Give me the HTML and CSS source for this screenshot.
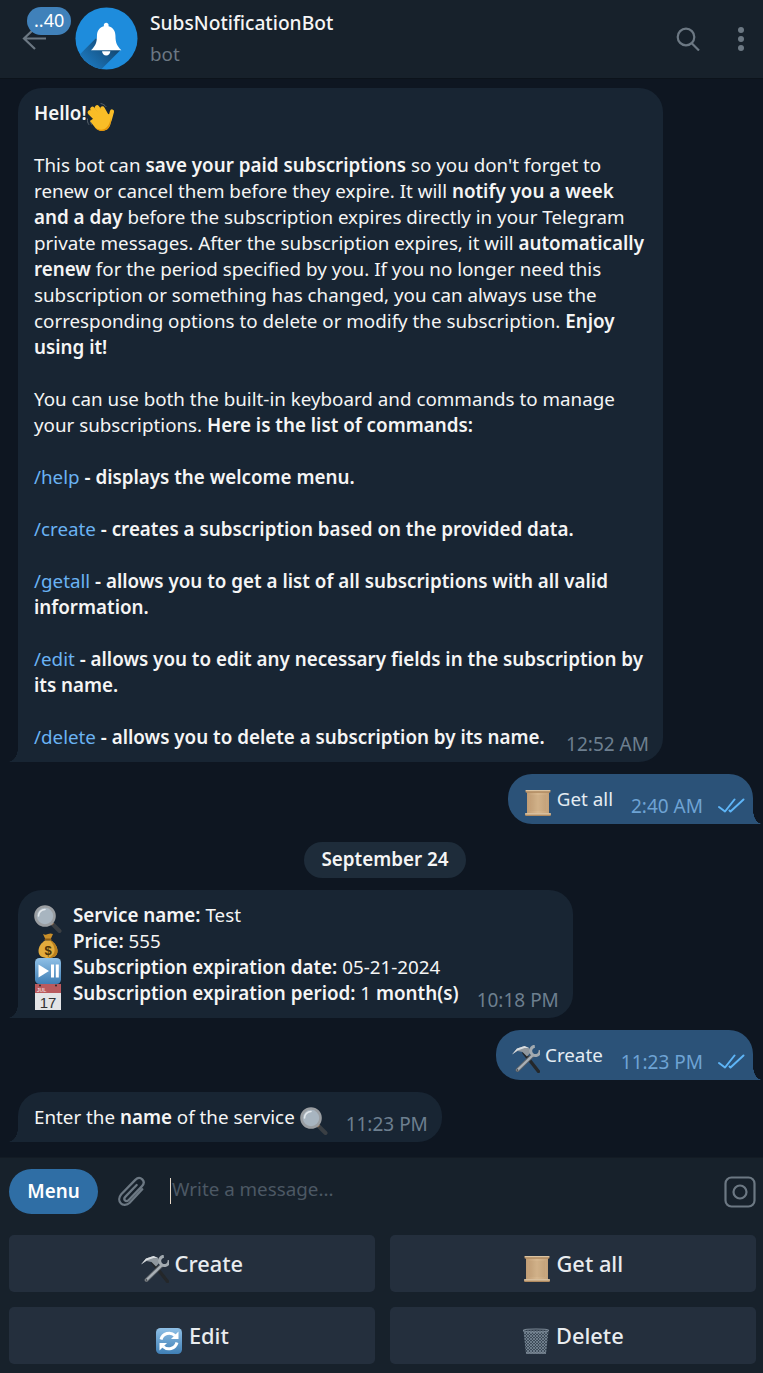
FILE: index.html
```html
<!DOCTYPE html>
<html lang="en">
<head>
  <meta charset="UTF-8">
  <meta name="viewport" content="width=device-width, initial-scale=1.0">
  <title>SubsNotificationBot</title>
  <link rel="stylesheet" href="styles.css">
</head>
<body>

<svg class="defs" width="0" height="0" aria-hidden="true">
  <defs>
    <linearGradient id="scrollFill" x1="0" x2="1" y1="0" y2="0">
      <stop offset="0" stop-color="#c09c74"/>
      <stop offset="0.5" stop-color="#d6b78f"/>
      <stop offset="1" stop-color="#c4a27a"/>
    </linearGradient>
    <linearGradient id="tileBlue" x1="0" x2="0" y1="0" y2="1">
      <stop offset="0" stop-color="#8fc0e6"/>
      <stop offset="1" stop-color="#3f7fb5"/>
    </linearGradient>
    <linearGradient id="bellShadow" gradientUnits="userSpaceOnUse" x1="34" y1="36" x2="12" y2="58">
      <stop offset="0" stop-color="#134a76"/>
      <stop offset="1" stop-color="#1c76bb"/>
    </linearGradient>
    <pattern id="mesh" width="3" height="3" patternUnits="userSpaceOnUse">
      <path d="M0 0L3 3M3 0L0 3" stroke="#8a9aa8" stroke-width="0.6"/>
    </pattern>
    <clipPath id="avatarClip"><circle cx="32" cy="32" r="31.5"/></clipPath>

    <symbol id="eWave" viewBox="6 3 28 28">
      <g fill="none" stroke="#5f6973" stroke-width="0.900" stroke-linecap="round">
        <path d="M20 3.600c2 .3 3.800 1.400 5 3"/>
        <path d="M6.500 19c-.3 2 .2 4 1.300 5.500"/>
        <path d="M9.500 21c0 1.200.4 2.300 1 3.300"/>
      </g>
      <g fill="none" stroke="#f9bd27" stroke-linecap="round">
        <path d="M9 12.500l9 9" stroke-width="4.600"/>
        <path d="M11.500 9l9.500 10.500" stroke-width="4.600"/>
        <path d="M16 7.500l7.500 10" stroke-width="4.600"/>
        <path d="M21.500 8.500l4.500 8" stroke-width="4.400"/>
        <path d="M31 11.500l-2.500 9" stroke-width="4.200"/>
      </g>
      <path d="M13 18l15-4c3 6 2.500 12-2 15.500-4.500 2.500-9 1.500-12-2l-5-6.500z" fill="#f9bd27"/>
      <path d="M14 27.500c3.500 2.500 8 3 11 .5 3-2.500 4.500-6 4.300-10.500 1 6-.5 9.500-3.300 12-4.500 2.500-9 1.500-12-2z" fill="#e59409"/>
    </symbol>

    <symbol id="eScroll" viewBox="0 0 28 28">
      <rect x="3" y="2" width="22" height="24" fill="url(#scrollFill)"/>
      <rect x="1.500" y="1" width="25" height="2.800" rx="1.200" fill="#b08a60"/>
      <rect x="1.500" y="1" width="25" height="1.200" rx="0.600" fill="#dcc4a1"/>
      <rect x="1" y="24.200" width="26" height="2.800" rx="1.200" fill="#b08a60"/>
      <rect x="1" y="24.200" width="26" height="1.200" rx="0.600" fill="#e2cdae"/>
      <g stroke="#b08f68" stroke-width="0.400" opacity="0.700">
        <path d="M6 7h16M6 9h16M6 11h16M6 13h16M6 15h16M6 17h16M6 19h16M6 21h16"/>
      </g>
    </symbol>

    <symbol id="eTools" viewBox="0 0 28 28">
      <path d="M12 8l14.500 18.500" stroke="#24272a" stroke-width="3.300" stroke-linecap="round"/>
      <path d="M0 9.500L5 3.500 12.500 1 17 3l2 4-4 4.500-4.500-4.500-5-1z" fill="#8f979e"/>
      <path d="M0 9.500L5 3.500 12.500 1 17 3l-4.500 0-7 2.500z" fill="#d9dde0"/>
      <path d="M20.500 10.500L5.500 25" stroke="#5c6268" stroke-width="4" stroke-linecap="round"/>
      <path d="M20.500 10.500L5.500 25" stroke="#a9b0b6" stroke-width="2.400" stroke-linecap="round"/>
      <path d="M28 5A4.700 4.700 0 1 1 22.800 1.200" fill="none" stroke="#a2aab0" stroke-width="3"/>
      <circle cx="5.500" cy="25" r="0.800" fill="#2b2f33"/>
    </symbol>

    <symbol id="eGlass" viewBox="0 0 28 28">
      <path d="M17.500 18L25.500 26" stroke="#3a3f44" stroke-width="4" stroke-linecap="round"/>
      <path d="M17 17.500l2 2" stroke="#8d6b4e" stroke-width="3"/>
      <circle cx="11" cy="11" r="9.500" fill="#a8b5c0" stroke="#9a9ea2" stroke-width="2.600"/>
      <path d="M4.500 11a6.500 6.500 0 0 1 6.500-6.500" fill="none" stroke="#e3e8ec" stroke-width="1.600" stroke-linecap="round"/>
    </symbol>

    <symbol id="eBag" viewBox="0 0 28 28">
      <path d="M9 3c2 1 3 .8 5 0 2-.8 3-.8 5 0l-2.500 5.500h-5z" fill="#c98f2a"/>
      <rect x="10.500" y="7.500" width="7" height="2" rx="1" fill="#8a5a15"/>
      <path d="M11 9.500C7 12 4.500 16 4.500 20c0 5 4 7 9.500 7s9.500-2 9.500-7c0-4-2.500-8-6.500-10.500z" fill="#e2ab3c"/>
      <path d="M17 9.500c4 2.500 6.500 6.500 6.500 10.500 0 5-4 7-9.500 7 5-2 7-5 6.500-9-.3-3-2-6-4.500-8.500z" fill="#b97f1d"/>
      <text class="bag-sign" x="14" y="23.500" text-anchor="middle">$</text>
    </symbol>

    <symbol id="ePlay" viewBox="0 0 28 28">
      <rect x="1" y="1" width="26" height="26" rx="4.500" fill="url(#tileBlue)"/>
      <path d="M4.500 7.500L15 14 4.500 20.500z" fill="#fff"/>
      <rect x="17" y="7.500" width="3" height="13" fill="#fff"/>
      <rect x="21.800" y="7.500" width="3" height="13" fill="#fff"/>
    </symbol>

    <symbol id="eCal" viewBox="0 0 28 28">
      <rect x="1" y="1" width="26" height="9" fill="#b95a5e"/>
      <rect x="1" y="10" width="26" height="17" fill="#e3e4e6"/>
      <circle cx="6" cy="2.500" r="1" fill="#2a2a2a"/>
      <circle cx="22" cy="2.500" r="1" fill="#2a2a2a"/>
      <text class="cal-month" x="7.500" y="8.500" text-anchor="middle">JUL</text>
      <text class="cal-day" x="14" y="24.500" text-anchor="middle">17</text>
    </symbol>

    <symbol id="eSync" viewBox="0 0 28 28">
      <rect x="1" y="1" width="26" height="26" rx="4.500" fill="url(#tileBlue)"/>
      <g fill="none" stroke="#fff" stroke-width="3">
        <path d="M6 12.500a8.500 8.500 0 0 1 14-4"/>
        <path d="M22 15.500a8.500 8.500 0 0 1-14 4"/>
      </g>
      <path d="M23.500 4.500v7.500H16z" fill="#fff"/>
      <path d="M4.500 23.500V16H12z" fill="#fff"/>
    </symbol>

    <symbol id="eBin" viewBox="0 0 28 28">
      <path d="M1.500 3.500h25L24 26.500H4z" fill="#3d4a58"/>
      <path d="M1.500 3.500h25L24 26.500H4z" fill="url(#mesh)"/>
      <ellipse cx="14" cy="3.500" rx="12.500" ry="1.500" fill="none" stroke="#7e8c99" stroke-width="1.200"/>
      <path d="M4 26h20" stroke="#7e8c99" stroke-width="1.400"/>
    </symbol>

    <symbol id="iTicks" viewBox="0 0 28 16">
      <g fill="none" stroke="#5eb5f7" stroke-width="2" stroke-linecap="round" stroke-linejoin="round">
        <path d="M1 9l6 4.500 9.500-12"/>
        <path d="M11.500 12.500l1 1 13-12"/>
      </g>
    </symbol>
  </defs>
</svg>

<header class="topbar">
  <div class="back">
    <svg class="back-arrow" width="25" height="23" viewBox="0 0 25 23" fill="none" stroke="#6c7883" stroke-width="2.200">
      <path d="M13 1L2 11.500 13 22M2 11.500h22"/>
    </svg>
    <span class="unread">..40</span>
  </div>
  <svg class="avatar" width="63" height="63" viewBox="0 0 64 64">
    <circle cx="32" cy="32" r="31.500" fill="#1e8cdc"/>
    <path d="M21 32L46 44 15 75H-22z" fill="url(#bellShadow)" clip-path="url(#avatarClip)"/>
    <path d="M31.700 16c-1.400 0-2.400 1-2.400 2.300v1.200c-4.500 1.200-7 4.800-7 10 0 6.500-1.500 10-6 14.500h30.800c-4.500-4.500-6-8-6-14.500 0-5.200-2.500-8.800-7-10v-1.200c0-1.300-1-2.300-2.400-2.300z" fill="#fff"/>
    <path d="M27.500 45h8.400a4.200 4.200 0 0 1-8.400 0z" fill="#fff"/>
  </svg>
  <div class="peer">
    <div class="peer-name">SubsNotificationBot</div>
    <div class="peer-status">bot</div>
  </div>
  <svg class="top-icon" width="24" height="24" viewBox="0 0 24 24" fill="none" stroke="#6c7883" stroke-width="2.200">
    <circle cx="10" cy="10" r="8.300"/>
    <path d="M15.500 16L23 23.500"/>
  </svg>
  <div class="dots"><i></i><i></i><i></i></div>
</header>

<main class="chat">
  <div class="bubble in wide">
    <p><b>Hello!</b><svg class="emoji"><use href="#eWave"/></svg></p>
    <p>This bot can <b>save your paid subscriptions</b> so you don't forget to renew or cancel them before they expire. It will <b>notify you a week and a day</b> before the subscription expires directly in your Telegram private messages. After the subscription expires, it will <b>automatically renew</b> for the period specified by you. If you no longer need this subscription or something has changed, you can always use the corresponding options to delete or modify the subscription. <b>Enjoy using it!</b></p>
    <p>You can use both the built-in keyboard and commands to manage your subscriptions. <b>Here is the list of commands:</b></p>
    <p><a>/help</a> <b>- displays the welcome menu.</b></p>
    <p><a>/create</a> <b>- creates a subscription based on the provided data.</b></p>
    <p><a>/getall</a> <b>- allows you to get a list of all subscriptions with all valid information.</b></p>
    <p><a>/edit</a> <b>- allows you to edit any necessary fields in the subscription by its name.</b></p>
    <div class="foot">
      <span><a>/delete</a> <b>- allows you to delete a subscription by its name.</b></span>
      <span class="meta"><span class="time">12:52 AM</span></span>
    </div>
  </div>

  <div class="bubble out">
    <div class="foot">
      <span><svg class="emoji"><use href="#eScroll"/></svg> Get all</span>
      <span class="meta"><span class="time">2:40 AM</span><svg class="ticks"><use href="#iTicks"/></svg></span>
    </div>
  </div>

  <div class="date-chip">September 24</div>

  <div class="bubble in">
    <div class="foot">
      <span>
        <span class="row"><svg class="emoji gap"><use href="#eGlass"/></svg><b>Service name:</b> Test</span>
        <span class="row"><svg class="emoji gap"><use href="#eBag"/></svg><b>Price:</b> 555</span>
        <span class="row"><svg class="emoji gap"><use href="#ePlay"/></svg><b>Subscription expiration date:</b> 05-21-2024</span>
        <span class="row"><svg class="emoji gap"><use href="#eCal"/></svg><b>Subscription expiration period:</b> 1 <b>month(s)</b></span>
      </span>
      <span class="meta"><span class="time">10:18 PM</span></span>
    </div>
  </div>

  <div class="bubble out">
    <div class="foot">
      <span><svg class="emoji"><use href="#eTools"/></svg> Create</span>
      <span class="meta"><span class="time">11:23 PM</span><svg class="ticks"><use href="#iTicks"/></svg></span>
    </div>
  </div>

  <div class="bubble in">
    <div class="foot">
      <span>Enter the <b>name</b> of the service <svg class="emoji"><use href="#eGlass"/></svg></span>
      <span class="meta"><span class="time">11:23 PM</span></span>
    </div>
  </div>
</main>

<footer class="composer">
  <div class="input-row">
    <button class="menu-btn">Menu</button>
    <svg class="attach" width="28" height="32" viewBox="0 0 30 34" fill="none" stroke="#6c7883" stroke-width="2.400" stroke-linecap="round">
      <path d="M26 14L12.500 28.500c-3 3-7.500 3-9.500 .5-2.500-2.500-2-6.500 .5-9.500L18.500 4c2.500-2.500 5.500-2.500 7.500-.5s2 5-.5 7.500L11.500 25.500c-1.500 1.500-3 1.500-4 .5s-1-2.500 .5-4L20 9.500"/>
    </svg>
    <div class="field"><span class="caret"></span><span class="placeholder">Write a message...</span></div>
    <svg class="camera" width="32" height="32" viewBox="0 0 32 32" fill="none" stroke="#6c7883" stroke-width="2.200">
      <rect x="1.500" y="1.500" width="29" height="29" rx="6"/>
      <circle cx="16" cy="16" r="6.500"/>
    </svg>
  </div>
  <div class="keyboard">
    <button class="key"><svg class="emoji"><use href="#eTools"/></svg> Create</button>
    <button class="key"><svg class="emoji"><use href="#eScroll"/></svg> Get all</button>
    <button class="key"><svg class="emoji"><use href="#eSync"/></svg> Edit</button>
    <button class="key"><svg class="emoji"><use href="#eBin"/></svg> Delete</button>
  </div>
</footer>

</body>
</html>
```

FILE: styles.css
```css
body {
  font-family: "Noto Sans", "Open Sans", sans-serif;
  font-size: 18.800px;
  line-height: 26px;
  background-color: #0e1621;
  color: #f5f5f5;
  margin: 0;
  height: 100vh;
  display: flex;
  flex-direction: column;
  overflow: hidden;
}

.defs {
  position: absolute;
}

.bag-sign {
  font: 700 13px "Liberation Sans", sans-serif;
  fill: #4a3208;
}

.cal-month {
  font: 700 5px "Liberation Sans", sans-serif;
  fill: #f1d6d6;
}

.cal-day {
  font: 400 15px "Liberation Sans", sans-serif;
  fill: #333;
}

/* header */
.topbar {
  flex: none;
  height: 78px;
  background-color: #17212b;
  border-bottom: 1px solid #0c131b;
  display: flex;
  align-items: center;
  padding: 0 15px 0 22px;
}

.back {
  position: relative;
  width: 53px;
  height: 64px;
  flex: none;
}

.back-arrow {
  position: absolute;
  left: 0;
  top: 20px;
}

.unread {
  position: absolute;
  left: 5px;
  top: 0;
  height: 28px;
  line-height: 27px;
  padding: 0 7px;
  border-radius: 14px;
  background-color: #4081ba;
  color: #fff;
  font-size: 18px;
}

.avatar {
  flex: none;
  margin-top: -1px;
}

.peer {
  flex: 1;
  margin-left: 12px;
  margin-top: -3px;
}

.peer-name {
  font-size: 19.200px;
  font-weight: 500;
  line-height: 28px;
  color: #f5f5f5;
}

.peer-status {
  color: #6c7883;
  line-height: 26px;
  margin-top: 4px;
}

.top-icon {
  flex: none;
  margin-right: 38px;
  margin-top: -1px;
}

.dots {
  display: flex;
  flex-direction: column;
  gap: 3px;
  margin-right: 4px;
  margin-top: -1px;
}

.dots i {
  width: 6px;
  height: 6px;
  border-radius: 50%;
  background-color: #6c7883;
}

/* messages */
.chat {
  flex: 1;
  padding-top: 9px;
  display: flex;
  flex-direction: column;
  align-items: flex-start;
  gap: 12px;
}

.bubble {
  position: relative;
  padding: 12px 14px 12px 16px;
  border-radius: 24px;
  margin-left: 18px;
}

.bubble p {
  margin: 0 0 26px;
}

.bubble b {
  font-weight: 600;
}

.bubble a {
  color: #6ab3f3;
}

.wide {
  width: 645px;
  box-sizing: border-box;
  padding-right: 18px;
}

.wide .foot {
  margin-right: -4px;
}

.in {
  background-color: #182533;
  border-bottom-left-radius: 0;
}

.in::before {
  content: "";
  position: absolute;
  left: -10px;
  bottom: 0;
  width: 10px;
  height: 14px;
  background: radial-gradient(ellipse 10px 14px at 0 0, transparent 97%, #182533 100%);
}

.out {
  align-self: flex-end;
  margin-left: 0;
  margin-right: 10px;
  padding-right: 7px;
  background-color: #2b5278;
  border-bottom-right-radius: 0;
  color: #e4ecf2;
}

.out::after {
  content: "";
  position: absolute;
  right: -9px;
  bottom: 0;
  width: 9px;
  height: 14px;
  background: radial-gradient(ellipse 9px 14px at 100% 0, transparent 97%, #2b5278 100%);
}

.foot {
  display: flex;
  justify-content: space-between;
  gap: 18px;
}

.row {
  display: block;
}

.meta {
  align-self: flex-end;
  flex: none;
  display: flex;
  align-items: center;
  gap: 15px;
  margin-bottom: -4px;
  line-height: 20px;
}

.time {
  font-size: 19px;
  color: #6d7f8f;
}

.out .time {
  color: #6ea3d4;
}

.ticks {
  width: 28px;
  height: 16px;
}

.emoji {
  width: 28px;
  height: 28px;
  vertical-align: -5px;
  margin: -6px 0;
}

.emoji.gap {
  margin-right: 11px;
}

.date-chip {
  align-self: center;
  margin: 6px 0 0 7px;
  padding: 4px 18px 6px;
  border-radius: 18px;
  background-color: #1e2c3a;
  font-weight: 600;
  color: #f5f5f5;
}

/* composer and keyboard */
.composer {
  flex: none;
  background-color: #17212b;
  border-top: 1px solid #131b24;
  padding: 11px 7px 9px 9px;
}

.input-row {
  display: flex;
  align-items: center;
  height: 45px;
  margin-bottom: 21px;
}

.menu-btn {
  flex: none;
  width: 89px;
  height: 45px;
  border: none;
  border-radius: 23px;
  padding-bottom: 2px;
  background-color: #2f6ea5;
  color: #fff;
  font: 600 18.800px "Noto Sans", sans-serif;
}

.attach {
  flex: none;
  margin-left: 20px;
}

.field {
  flex: 1;
  display: flex;
  align-items: center;
  margin-left: 24px;
  margin-bottom: 1px;
}

.caret {
  width: 1px;
  height: 26px;
  background-color: #e8d9c8;
}

.placeholder {
  margin-left: 1px;
  color: #4c5864;
  position: relative;
  top: -2px;
}

.camera {
  flex: none;
}

.keyboard {
  display: grid;
  grid-template-columns: 1fr 1fr;
  gap: 15px;
}

.key {
  height: 57px;
  border: none;
  border-radius: 5px;
  background-color: #242f3d;
  color: #e9ecef;
  font: 500 21.800px "Noto Sans", sans-serif;
}
```
